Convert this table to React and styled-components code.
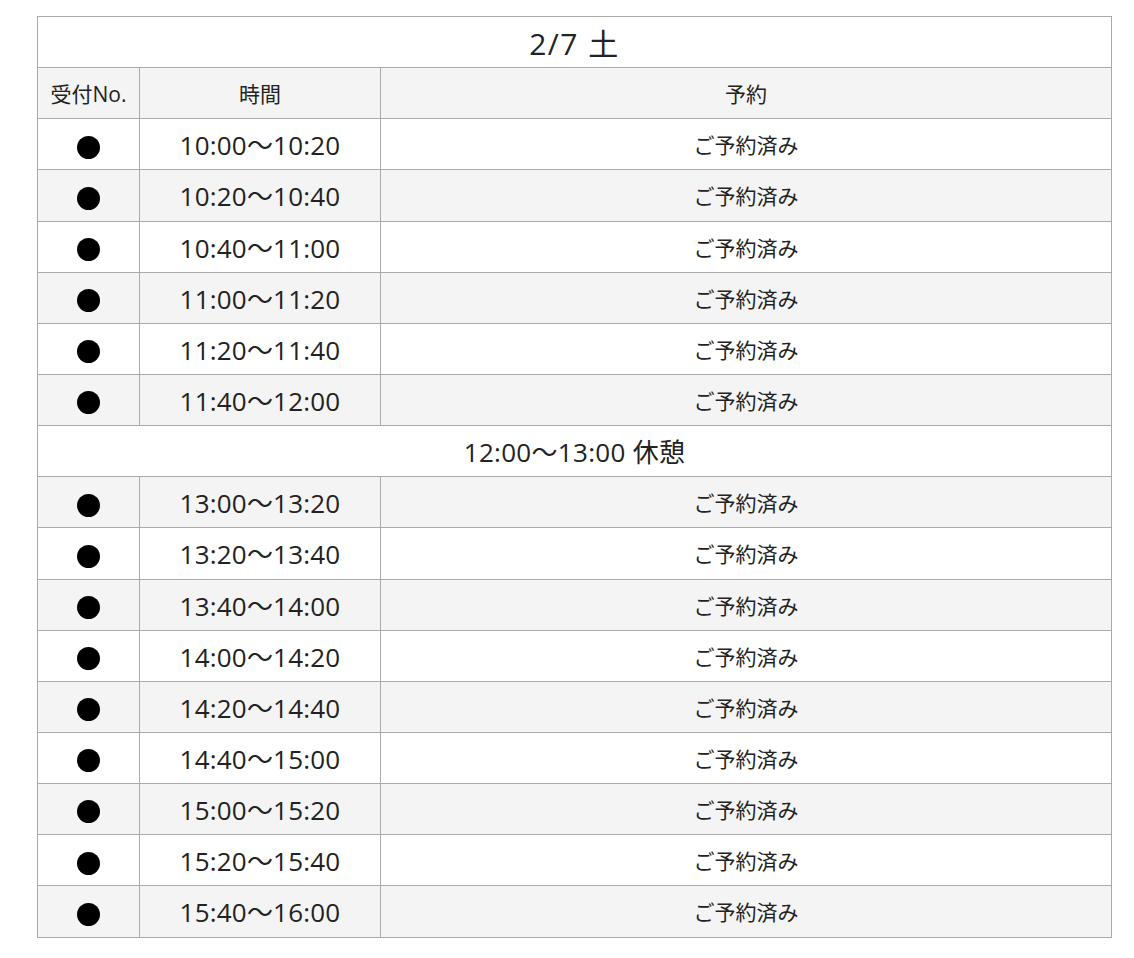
import React from "react";
import styled, { createGlobalStyle } from "styled-components";

const GlobalStyle = createGlobalStyle`
  body {
    margin: 0;
    background: #fff;
    font-family: "Open Sans", "Noto Sans CJK JP", sans-serif;
    color: #222;
  }
`;

const Page = styled.div`
  padding: 16px 23px 20px 37px;
`;

const Table = styled.table`
  width: 1075px;
  border-collapse: collapse;
  table-layout: fixed;

  tr:nth-child(odd) {
    background: #f4f4f4;
  }
`;

const Col = styled.col`
  width: ${(p) => (p.$w ? `${p.$w}px` : "auto")};
`;

const Row = styled.tr`
  height: 51.15px;
`;

const TitleCell = styled.th`
  border: 1px solid #aaa;
  background: #fff;
  font-size: 30px;
  font-weight: 400;
  letter-spacing: 1.5px;
  padding: 0;
  text-align: center;
`;

const HeadCell = styled.th`
  border: 1px solid #aaa;
  font-size: 21px;
  font-weight: 400;
  padding: 0;
  text-align: center;
`;

const Cell = styled.td`
  border: 1px solid #aaa;
  padding: 0;
  text-align: center;
  font-size: ${(p) => p.$size || 21}px;
  letter-spacing: ${(p) => p.$spacing || 0}px;
`;

const Dot = styled.span`
  display: inline-block;
  width: 23px;
  height: 23px;
  border-radius: 50%;
  background: #000;
  vertical-align: middle;
  margin-top: 1px;
`;

const morning = [
  "10:00〜10:20",
  "10:20〜10:40",
  "10:40〜11:00",
  "11:00〜11:20",
  "11:20〜11:40",
  "11:40〜12:00",
];

const afternoon = [
  "13:00〜13:20",
  "13:20〜13:40",
  "13:40〜14:00",
  "14:00〜14:20",
  "14:20〜14:40",
  "14:40〜15:00",
  "15:00〜15:20",
  "15:20〜15:40",
  "15:40〜16:00",
];

function SlotRow({ time }) {
  return (
    <Row>
      <Cell>
        <Dot />
      </Cell>
      <Cell $size={26} $spacing={0.2}>{time}</Cell>
      <Cell $size={21}>ご予約済み</Cell>
    </Row>
  );
}

export default function App() {
  return (
    <Page>
      <GlobalStyle />
      <Table>
        <colgroup>
          <Col $w={102} />
          <Col $w={241} />
          <Col />
        </colgroup>
        <thead>
          <Row>
            <TitleCell colSpan={3}>2/7 土</TitleCell>
          </Row>
        </thead>
        <tbody>
          <Row>
            <HeadCell>受付No.</HeadCell>
            <HeadCell>時間</HeadCell>
            <HeadCell>予約</HeadCell>
          </Row>
          {morning.map((t) => (
            <SlotRow key={t} time={t} />
          ))}
          <Row>
            <Cell colSpan={3} $size={26} $spacing={0.3}>
              12:00〜13:00 休憩
            </Cell>
          </Row>
          {afternoon.map((t) => (
            <SlotRow key={t} time={t} />
          ))}
        </tbody>
      </Table>
    </Page>
  );
}
